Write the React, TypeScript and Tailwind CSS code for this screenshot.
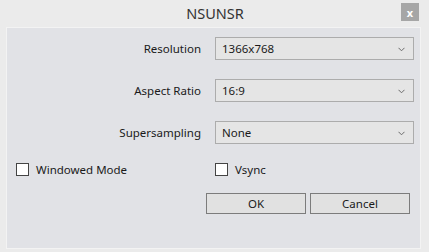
import React from "react";

function Select({ value }: { value: string }) {
  return (
    <div className="flex h-[23px] w-[199px] items-center justify-between border border-[#acacac] bg-[#e5e5e5] pl-[6px] pr-[8px] text-[11.5px] text-[#1a1a1a]">
      <span>{value}</span>
      <svg width="7" height="5" viewBox="0 0 7 5" className="mt-[1px]">
        <path d="M0.5 0.8 L3.5 3.8 L6.5 0.8" fill="none" stroke="#6b6b6b" strokeWidth="1" />
      </svg>
    </div>
  );
}

function Row({ label, value }: { label: string; value: string }) {
  return (
    <div className="flex items-center">
      <div className="w-[194px] text-right text-[11.5px] text-[#1a1a1a]">{label}</div>
      <div className="ml-[14px]">
        <Select value={value} />
      </div>
    </div>
  );
}

function Check({ label }: { label: string }) {
  return (
    <div className="flex items-center">
      <div className="h-[13px] w-[13px] border border-[#444] bg-white" />
      <span className="ml-[7px] text-[11.5px] text-[#1a1a1a]">{label}</span>
    </div>
  );
}

export default function App() {
  return (
    <div
      className="flex h-[252px] w-[429px] flex-col bg-[#ebebeb]"
      style={{ fontFamily: '"Noto Sans", "Open Sans", sans-serif' }}
    >
      <div className="relative flex h-[27px] shrink-0 items-center justify-center">
        <span className="pl-[1px] text-[14.5px] leading-none text-[#333]">NSUNSR</span>
        <div className="absolute right-[10px] top-[3px] flex h-[18px] w-[18px] items-center justify-center bg-[#a6a6a6] text-[11px] font-bold leading-none text-white">
          x
        </div>
      </div>
      <div className="ml-[6px] mr-[8px] flex h-[222px] flex-col border border-[#f3f3f3] bg-[#e1e2e6]">
        <div className="mt-[9px] flex flex-col gap-[19px]">
          <Row label="Resolution" value="1366x768" />
          <Row label="Aspect Ratio" value="16:9" />
          <Row label="Supersampling" value="None" />
        </div>
        <div className="mt-[17px] flex">
          <div className="w-[208px] pl-[9px]">
            <Check label="Windowed Mode" />
          </div>
          <Check label="Vsync" />
        </div>
        <div className="mt-[15px] flex gap-[4px] pl-[199px]">
          <div className="flex h-[21px] w-[100px] items-center justify-center border border-[#7c7c7c] bg-[#e1e1e1] text-[11.5px] text-[#1a1a1a]">
            OK
          </div>
          <div className="flex h-[21px] w-[100px] items-center justify-center border border-[#7c7c7c] bg-[#e1e1e1] text-[11.5px] text-[#1a1a1a]">
            Cancel
          </div>
        </div>
      </div>
    </div>
  );
}
